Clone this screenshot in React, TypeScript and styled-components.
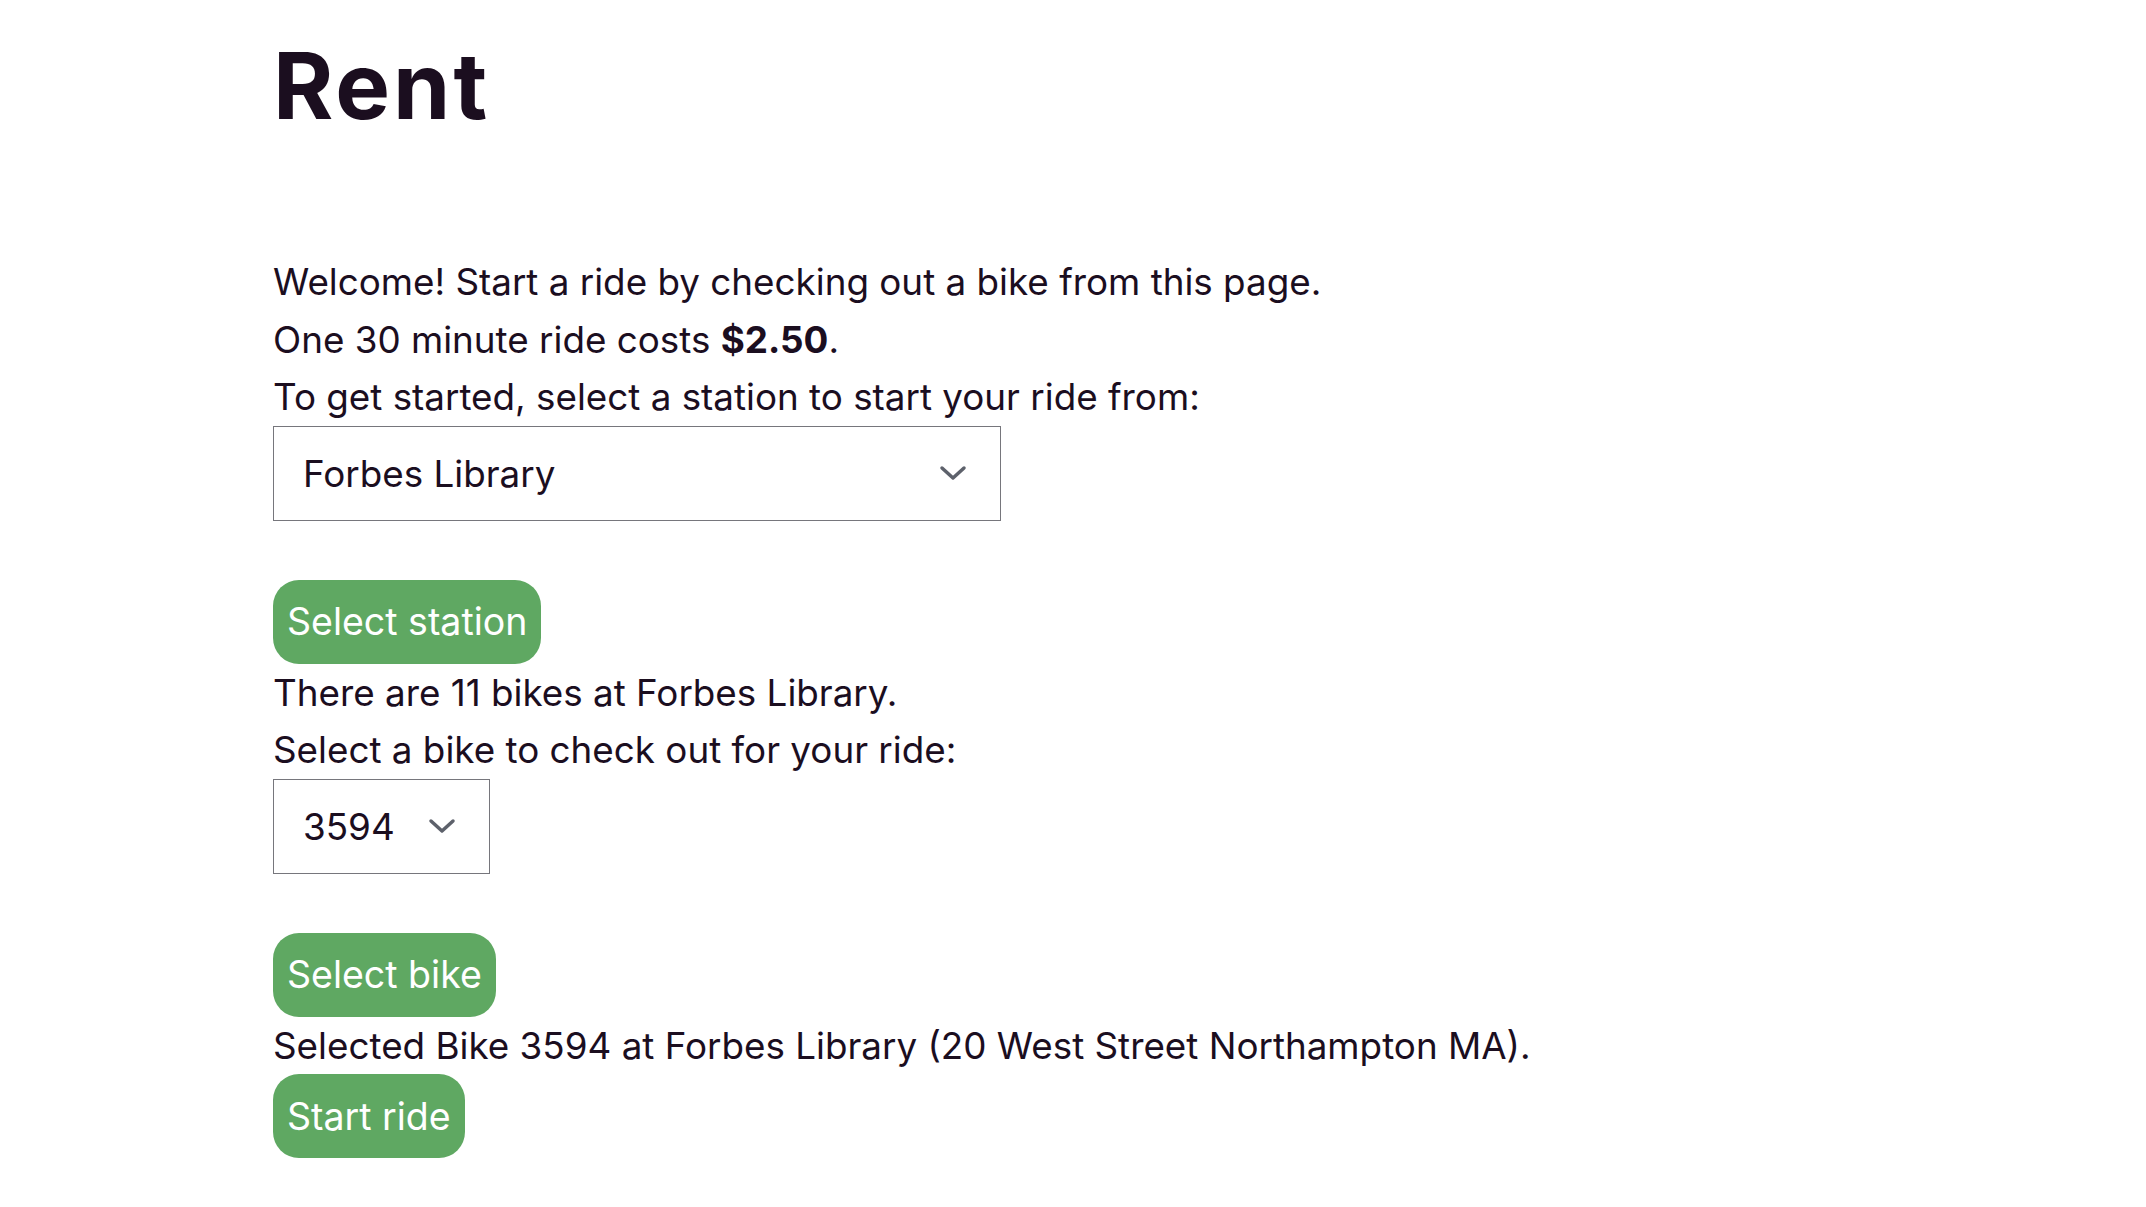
import styled, { createGlobalStyle } from "styled-components"

const GlobalStyle = createGlobalStyle`
    body {
        margin: 0;
        background: #ffffff;
        font-family: Inter, "Noto Sans", sans-serif;
        color: #1b0e1f;
    }
`

function Chevron() {
    return (
        <svg width="28" height="16" viewBox="0 0 28 16" fill="none">
            <path d="M3 3 L14 13 L25 3" stroke="#5d616b" strokeWidth="3.5" strokeLinecap="round" strokeLinejoin="round" />
        </svg>
    )
}

export default function App() {
    return <>
        <GlobalStyle />
        <Page>
            <Title>Rent</Title>

            <Line>Welcome! Start a ride by checking out a bike from this page.</Line>
            <Line>One 30 minute ride costs <strong>$2.50</strong>.</Line>
            <Line>To get started, select a station to start your ride from:</Line>

            <SelectBox $width={728}>
                <Select defaultValue="forbes">
                    <option value="forbes">Forbes Library</option>
                </Select>
                <Arrow><Chevron /></Arrow>
            </SelectBox>
            <Button>Select station</Button>

            <Line>There are 11 bikes at Forbes Library.</Line>
            <Line>Select a bike to check out for your ride:</Line>

            <SelectBox $width={217}>
                <Select defaultValue="3594">
                    <option value="3594">3594</option>
                </Select>
                <Arrow><Chevron /></Arrow>
            </SelectBox>
            <Button>Select bike</Button>

            <Line>Selected Bike 3594 at Forbes Library (20 West Street Northampton MA).</Line>
            <Button>Start ride</Button>
        </Page>
    </>
}

const Page = styled.main`
    width: 1600px;
    margin: 0 auto;
    padding-top: 31px;
    display: flex;
    flex-direction: column;
    align-items: flex-start;
`

const Title = styled.h1`
    margin: 0 0 112px;
    font-size: 92px;
    line-height: 110px;
    font-weight: 700;
    letter-spacing: 3px;
`

const Line = styled.p`
    margin: 0;
    font-size: 36.8px;
    line-height: 57.5px;

    strong {
        font-weight: 700;
    }
`

const SelectBox = styled.div<{ $width: number }>`
    position: relative;
    width: ${p => p.$width}px;
    height: 95px;
    margin-bottom: 59px;
`

const Select = styled.select`
    appearance: none;
    width: 100%;
    height: 100%;
    box-sizing: border-box;
    border: 1.5px solid #76767c;
    border-radius: 0;
    background: #ffffff;
    padding: 0 80px 0 29px;
    font-family: Inter, "Noto Sans", sans-serif;
    font-size: 36.8px;
    color: #1b0e1f;
    outline: none;
`

const Arrow = styled.span`
    position: absolute;
    right: 34px;
    top: 50%;
    transform: translateY(-50%);
    display: flex;
    pointer-events: none;
`

const Button = styled.button`
    height: 84px;
    padding: 0 14px;
    border: none;
    border-radius: 26px;
    background: #5fa862;
    color: #ffffff;
    font-family: Inter, "Noto Sans", sans-serif;
    font-size: 37.5px;
    cursor: pointer;
`
